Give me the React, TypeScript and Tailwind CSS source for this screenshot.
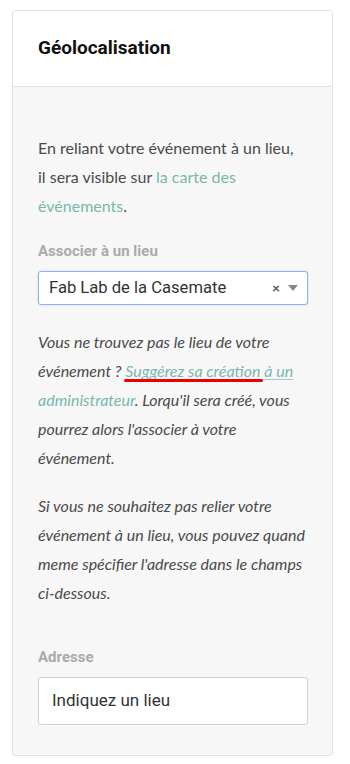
import React from "react";

const body = { fontFamily: "Lato, 'Open Sans', sans-serif" };

export default function App() {
  return (
    <div className="min-h-[764px] w-[350px] bg-white pt-[10px]" style={body}>
      <div className="ml-[12px] w-[321px] overflow-hidden rounded-[3px] border border-[#e2e2e2]">
        <div className="flex h-[76px] items-center border-b border-[#e2e2e2] bg-white pl-[25px]">
          <h2 className="text-[19px] font-bold text-[#111]" style={{ fontFamily: "Roboto, sans-serif" }}>
            Géolocalisation
          </h2>
        </div>
        <div className="bg-[#f7f7f7] px-[25px] pb-[30px] pt-[46px]">
          <p className="text-[16px] leading-[29px] text-[#4a4a4a]">
            En reliant votre événement à un lieu,
            <br />
            il sera visible sur <a className="text-[#77b8ae]">la carte des</a>
            <br />
            <a className="text-[#77b8ae]">événements</a>.
          </p>
          <div
            className="mt-[21px] text-[15px] font-bold leading-[20px] text-[#aaa]"
            style={{ fontFamily: "Roboto, sans-serif" }}
          >
            Associer à un lieu
          </div>
          <div className="mt-[10px] flex h-[34px] w-[270px] items-center rounded-[3px] border border-[#8fb3ec] bg-white pl-[10px] pr-[9px] shadow-[0_0_2px_rgba(90,140,230,0.4)]">
            <span className="flex-1 text-[16.6px] text-[#333]" style={{ fontFamily: "Roboto, sans-serif" }}>
              Fab Lab de la Casemate
            </span>
            <span className="mr-[8px] text-[14px] font-bold leading-none text-[#555]">×</span>
            <svg width="10" height="6" viewBox="0 0 10 6">
              <path d="M0 0 L10 0 L5 6 Z" fill="#888" />
            </svg>
          </div>
          <p className="mt-[22px] text-[16px] italic leading-[29px] text-[#4a4a4a]">
            Vous ne trouvez pas le lieu de votre
            <br />
            événement ?{" "}
            <a className="relative text-[#77b8ae] underline decoration-[#9ccbc4] underline-offset-2">
              <span className="relative">
                Suggérez sa création
                <span className="absolute -bottom-[2px] -left-[1px] -right-[2px] h-[3px] rounded-full bg-[#ee0000]" />
              </span>{" "}
              à un
            </a>
            <br />
            <a className="text-[#77b8ae]">administrateur</a>. Lorqu'il sera créé, vous
            <br />
            pourrez alors l'associer à votre
            <br />
            événement.
          </p>
          <p className="mt-[19px] text-[16px] italic leading-[29px] text-[#4a4a4a]">
            Si vous ne souhaitez pas relier votre
            <br />
            événement à un lieu, vous pouvez quand
            <br />
            meme spécifier l'adresse dans le champs
            <br />
            ci-dessous.
          </p>
          <div
            className="mt-[40px] text-[15px] font-bold leading-[20px] text-[#aaa]"
            style={{ fontFamily: "Roboto, sans-serif" }}
          >
            Adresse
          </div>
          <div className="mt-[10px] flex h-[48px] w-[270px] items-center rounded-[3px] border border-[#d0d0d0] bg-white pl-[13px]">
            <span className="text-[17px] text-[#333]" style={{ fontFamily: "Roboto, sans-serif" }}>
              Indiquez un lieu
            </span>
          </div>
        </div>
      </div>
    </div>
  );
}
